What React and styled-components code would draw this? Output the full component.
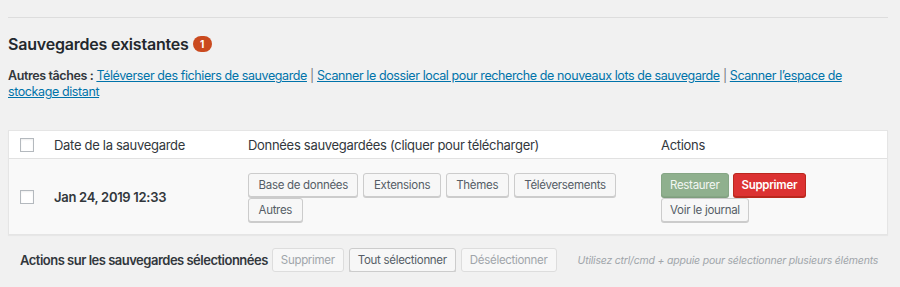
import React from 'react'
import styled, { createGlobalStyle } from 'styled-components'

const GlobalStyle = createGlobalStyle`
  html, body {
    margin: 0;
    padding: 0;
    background: #f1f1f1;
  }
  body {
    font-family: Inter, "Noto Sans", "Liberation Sans", sans-serif;
    font-size: 13px;
    letter-spacing: -0.3px;
    color: #23282d;
  }
`

const Page = styled.div`
  padding: 17px 12px 0 8px;
`

const Rule = styled.hr`
  border: none;
  border-top: 1px solid #dddddd;
  margin: 0;
`

const Title = styled.h2`
  display: flex;
  align-items: center;
  gap: 4px;
  margin: 16px 0 0;
  font-size: 16px;
  line-height: 20px;
  font-weight: 600;
  letter-spacing: -0.2px;
  color: #23282d;
`

const Badge = styled.span`
  display: inline-flex;
  align-items: center;
  justify-content: center;
  min-width: 19px;
  height: 16px;
  border-radius: 8px;
  background: #ca4a1f;
  color: #fff;
  font-size: 10px;
  font-weight: 700;
  letter-spacing: 0;
`

const Tasks = styled.p`
  margin: 14px 0 0;
  line-height: 16px;
  font-size: 12.5px;
  letter-spacing: -0.4px;
  color: #32373c;
  b { font-weight: 600; }
  a {
    color: #0073aa;
    text-decoration: underline;
  }
`

const Sep = styled.span`
  color: #72777c;
`

const Table = styled.div`
  margin-top: 30px;
  background: #fff;
  border: 1px solid #e5e5e5;
  box-shadow: 0 1px 1px rgba(0, 0, 0, 0.04);
  display: grid;
  grid-template-columns: 45px 194px 413px 1fr;
`

const HeadCell = styled.div`
  height: 27px;
  display: flex;
  align-items: center;
  padding-left: ${p => (p.$check ? '11px' : '0')};
  border-bottom: 1px solid #e1e1e1;
  color: #32373c;
  font-size: 13px;
`

const Cell = styled.div`
  background: #f9f9f9;
  height: 75px;
  box-sizing: border-box;
  display: flex;
  align-items: ${p => (p.$top ? 'flex-start' : 'center')};
  padding: ${p => (p.$top ? '14px 0 0' : '0')};
  padding-left: ${p => (p.$check ? '11px' : '0')};
`

const Check = styled.span`
  display: block;
  width: 14px;
  height: 14px;
  box-sizing: border-box;
  border: 1px solid #b4b9be;
  background: #fff;
  box-shadow: inset 0 1px 2px rgba(0, 0, 0, 0.07);
`

const DateText = styled.span`
  font-weight: 600;
  color: #32373c;
  font-size: 13px;
`

const Buttons = styled.div`
  display: flex;
  flex-wrap: wrap;
  column-gap: ${p => p.$gap || 5}px;
  row-gap: 1px;
  max-width: ${p => p.$max || 'none'};
`

const Button = styled.span`
  display: inline-flex;
  align-items: center;
  height: 24px;
  box-sizing: border-box;
  padding: 0 ${p => p.$pad || 8}px;
  border-radius: 3px;
  border: 1px solid ${p => (p.$disabled ? '#dddddd' : '#cccccc')};
  background: #f7f7f7;
  box-shadow: ${p => (p.$disabled ? 'none' : '0 1px 0 #cccccc')};
  color: ${p => (p.$disabled ? '#a0a5aa' : '#555d66')};
  font-size: 11.5px;
  letter-spacing: -0.3px;
  white-space: nowrap;
`

const Restore = styled(Button)`
  background: #8fb08e;
  border-color: #86a685;
  box-shadow: 0 1px 0 #7f9e7e;
  color: #f3f7f3;
`

const Delete = styled(Button)`
  background: #dc3232;
  border-color: #ba281e;
  box-shadow: 0 1px 0 #ba281e;
  color: #fff;
  font-weight: 600;
`

const Footer = styled.div`
  display: flex;
  align-items: center;
  gap: 5px;
  margin-top: 13px;
  padding-left: 12px;
  white-space: nowrap;
`

const FooterLabel = styled.span`
  font-weight: 600;
  color: #32373c;
  letter-spacing: -0.5px;
  margin-right: -1px;
`

const Hint = styled.em`
  margin-left: 16px;
  color: #a0a5aa;
  font-size: 10.5px;
  letter-spacing: -0.2px;
`

export default function App() {
  return (
    <Page>
      <GlobalStyle />
      <Rule />
      <Title>
        Sauvegardes existantes <Badge>1</Badge>
      </Title>
      <Tasks>
        <b>Autres tâches :</b>{' '}
        <a href="#">Téléverser des fichiers de sauvegarde</a> <Sep>|</Sep>{' '}
        <a href="#">Scanner le dossier local pour recherche de nouveaux lots de sauvegarde</a> <Sep>|</Sep>{' '}
        <a href="#">Scanner l’espace de stockage distant</a>
      </Tasks>

      <Table>
        <HeadCell $check><Check /></HeadCell>
        <HeadCell>Date de la sauvegarde</HeadCell>
        <HeadCell>Données sauvegardées (cliquer pour télécharger)</HeadCell>
        <HeadCell>Actions</HeadCell>

        <Cell $check><Check /></Cell>
        <Cell><DateText>Jan 24, 2019 12:33</DateText></Cell>
        <Cell $top>
          <Buttons $max="400px">
            <Button $pad={9.5}>Base de données</Button>
            <Button $pad={9.5}>Extensions</Button>
            <Button $pad={9.5}>Thèmes</Button>
            <Button $pad={9.5}>Téléversements</Button>
            <Button $pad={9.5}>Autres</Button>
          </Buttons>
        </Cell>
        <Cell $top>
          <Buttons $gap={4} $max="170px">
            <Restore>Restaurer</Restore>
            <Delete>Supprimer</Delete>
            <Button>Voir le journal</Button>
          </Buttons>
        </Cell>
      </Table>

      <Footer>
        <FooterLabel>Actions sur les sauvegardes sélectionnées</FooterLabel>
        <Button $disabled>Supprimer</Button>
        <Button>Tout sélectionner</Button>
        <Button $disabled>Désélectionner</Button>
        <Hint>Utilisez ctrl/cmd + appuie pour sélectionner plusieurs éléments</Hint>
      </Footer>
    </Page>
  )
}
